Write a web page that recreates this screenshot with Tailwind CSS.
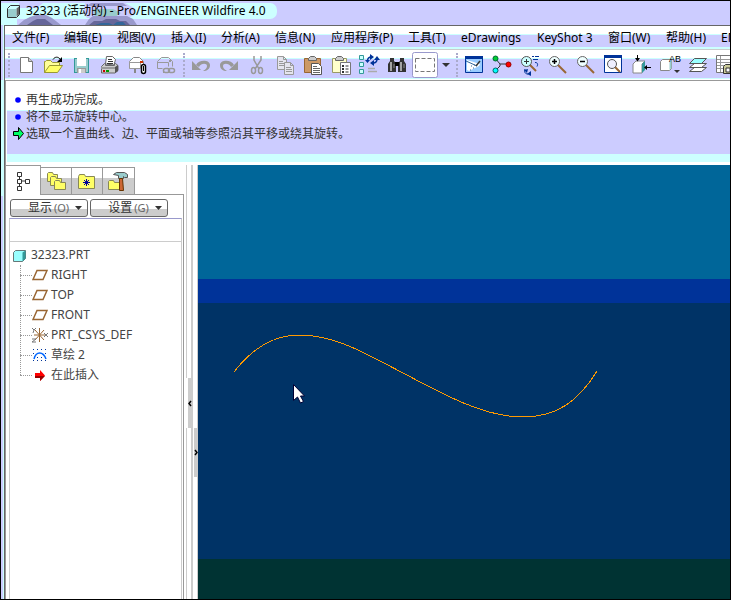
<!DOCTYPE html>
<html lang="zh-CN">
<head>
  <meta charset="UTF-8">
  <meta name="viewport" content="width=device-width, initial-scale=1.0">
  <title>32323 (活动的) - Pro/ENGINEER Wildfire 4.0</title>
  <script src="https://cdn.jsdelivr.net/npm/@tailwindcss/browser@4"></script>
  <style>
    body { font-family: 'Noto Sans', 'Noto Sans CJK SC', sans-serif; }
  </style>
</head>
<body class="h-screen overflow-hidden border border-black bg-[#ccccff] text-[12px] text-black flex flex-col">

<!-- title bar -->
<header class="relative h-6 shrink-0 overflow-hidden">
  <svg class="absolute left-0 top-0" width="290" height="24" viewBox="0 0 290 24">
    <path d="M0 2h16v22H0z" fill="#ccffff"/>
    <rect x="10" y="2" width="266" height="16" rx="7" fill="#ccffff"/>
    <path d="M18 2h24l-6 5H18z" fill="#ccccff"/>
    <path d="M84 2h40l9 5v7l-6 3H86l-4-6z" fill="#ccccff"/>
    <path d="M90 2h32l4 3H86z" fill="#9999cc"/>
    <path d="M92 8h20l8 4-6 4H94z" fill="#99cccc"/>
    <path d="M17 24l6-5 6-3 6-2h10l6 3 9 7z" fill="#9999cc"/>
    <path d="M26 24l6-4 4-2h8l8 6z" fill="#666699"/>
    <path d="M84 24l4-6 4-3h34l6 3 4 6z" fill="#9999cc"/>
    <path d="M88 24l5-4h8l4-2h10l4 2h6l4 4z" fill="#666699"/>
    <path d="M94 24l6-2h8l4 2zM112 24l4-3h6l3 3z" fill="#336699"/>
  </svg>
  <div class="relative flex h-5 items-center gap-[6px] pl-[6px]">
    <svg width="13" height="13" viewBox="0 0 13 13">
      <path d="M.5 3.500l3-3h9v9l-3 3h-9z" fill="#ccffff" stroke="#333"/>
      <path d="M1 4h8v8H1z" fill="#99cccc"/><path d="M9.500 3.500l2.500-2v8l-2.500 2z" fill="#666"/>
    </svg>
    <h1>32323 (活动的) - Pro/ENGINEER Wildfire 4.0</h1>
  </div>
</header>

<div class="flex min-h-0 flex-1">
  <div class="w-[2px] shrink-0 bg-[linear-gradient(#ccccff_55px,#ccffff_55px,#ccffff_171px,#ccccff_171px)]"></div>
  <div class="w-px shrink-0 bg-[#ccffff]"></div>

  <div class="flex min-w-0 flex-1 flex-col border-l border-t border-[#666] bg-white">

    <!-- menu -->
    <nav class="grid h-6 shrink-0 grid-cols-[52px_53px_54px_50px_54px_56px_77px_53px_76px_71px_58px_55px_60px] items-center overflow-hidden whitespace-nowrap border-b border-[#ccc] bg-[linear-gradient(#fff_8px,#cff_8px,#cff_9px,#ccf_9px,#ccf_21px,#cff_21px,#cff_23px)] pl-[7px]">
      <a href="#">文件(F)</a>
      <a href="#">编辑(E)</a>
      <a href="#">视图(V)</a>
      <a href="#">插入(I)</a>
      <a href="#">分析(A)</a>
      <a href="#">信息(N)</a>
      <a href="#">应用程序(P)</a>
      <a href="#">工具(T)</a>
      <a href="#">eDrawings</a>
      <a href="#">KeyShot 3</a>
      <a href="#">窗口(W)</a>
      <a href="#">帮助(H)</a>
      <a href="#">EMX</a>
    </nav>

    <!-- toolbar -->
    <div class="flex h-[31px] shrink-0 items-center overflow-hidden border-b border-[#999] bg-[linear-gradient(#fff_8px,#cff_8px,#cff_9px,#ccf_9px,#ccf_28px,#cff_28px,#cff_29px,#fff_29px)] [&_button]:shrink-0">
      <div class="flex w-[7px] shrink-0 justify-center"><div class="h-6 border-l-2 border-dotted border-[#aaaacc]"></div></div>
      <button class="h-6 w-7" aria-label="新建"><svg width="28" height="24"><path d="M8.500 4.500h8l4 4v11h-12z" fill="#fff" stroke="#777"/><path d="M16.500 4.500v4h4" fill="#ccc" stroke="#777"/></svg></button>
      <button class="h-6 w-7" aria-label="打开"><svg width="28" height="24"><path d="M4.500 19.500v-11h1l1-1h4l2 2h7v3" fill="#ffff99" stroke="#999933"/><path d="M4.500 19.500l5-7h13l-5 7z" fill="#ffff66" stroke="#999933"/><path d="M13 6.500c2-3 5-3 7-.5" fill="none" stroke="#000"/><path d="M22 4v5h-5z"/></svg></button>
      <button class="h-6 w-7" aria-label="保存"><svg width="28" height="24" shape-rendering="crispEdges"><path d="M6 5h15v15H6z" fill="#339999"/><path d="M7 6h13v13H7z" fill="#99cccc"/><path d="M9 5h9v8H9z" fill="#fff"/><path d="M9 15h9v5H9z" fill="#999"/><path d="M10 16h7v4h-7z" fill="#ccc"/><path d="M11 16h2v4h-2z" fill="#fff"/></svg></button>
      <button class="h-6 w-7" aria-label="打印"><svg width="28" height="24"><path d="M9.500 11l1-7.500h6l3 3L18 12z" fill="#fff" stroke="#666"/><path d="M12 6.500h4m-4 2h5m-6 2h6" stroke="#333"/><path d="M5.500 13.500l3-3h1v2h9v-2h1l2.500 2v5l-3 2.500h-13.500z" fill="#ccc" stroke="#666"/><path d="M5 14h14v2H5z" fill="#999"/><path d="M19 14l3-2v6l-3 2z" fill="#555"/><path d="M7 17h2v2H7z" fill="#c00"/><path d="M10 17h3v2h-3z" fill="#090"/></svg></button>
      <button class="h-6 w-7" aria-label="发送邮件"><svg width="28" height="24"><path d="M5.500 15.500v-7l4-4h6l4 4v7" fill="#fff" stroke="#888"/><path d="M5.500 9.500h11v6h-11z" fill="#fff" stroke="#999"/><path d="M11 16v4" stroke="#888" stroke-width="2"/><path d="M16 8h3v2h-3z" fill="#c30"/><rect x="17.500" y="11.500" width="4" height="9" rx="2" fill="#fff" stroke="#000" stroke-width="1.500"/><path d="M19.500 13v5" stroke="#000"/></svg></button>
      <button class="h-6 w-7" aria-label="发送链接"><svg width="28" height="24" fill="none" stroke="#999"><path d="M5.500 15.500v-7l4-4h7l4 4v5M5.500 9.500h11v4M5.500 15.500h5M11.500 16v4"/><path d="M17 8h2" stroke-width="2"/><rect x="11.500" y="15.500" width="6" height="4" rx="2" stroke-width="1.500"/><rect x="16.500" y="15.500" width="6" height="4" rx="2" stroke-width="1.500"/></svg></button>
      <div class="flex w-[7px] shrink-0 justify-center"><div class="h-6 border-l-2 border-dotted border-[#aaaacc]"></div></div>
      <button class="h-6 w-7" aria-label="撤消"><svg width="28" height="24"><path d="M9 12c3-6 14-5 14 0 0 4-3 6-7 6 3-2 4-3 4-5 0-3-6-3-8 1z" fill="#999"/><path d="M5 8v9h9z" fill="#999"/></svg></button>
      <button class="h-6 w-7" aria-label="重做"><svg width="28" height="24"><path d="M19 12c-3-6-14-5-14 0 0 4 3 6 7 6-3-2-4-3-4-5 0-3 6-3 8 1z" fill="#999"/><path d="M23 8v9h-9z" fill="#999"/></svg></button>
      <button class="h-6 w-7" aria-label="剪切"><svg width="28" height="24" fill="none" stroke="#999" stroke-width="1.500"><path d="M11 3v4l5 9M18 3v4l-6 9"/><ellipse cx="10.500" cy="17.500" rx="2" ry="3"/><ellipse cx="17.500" cy="17.500" rx="2" ry="3"/></svg></button>
      <button class="h-6 w-7" aria-label="复制"><svg width="28" height="24" fill="#e5e5ee" stroke="#999"><path d="M6.500 3.500h6l3 3v10h-9zM12.500 3.500v3h3M8 8.500h4m-4 2h5m-5 2h5"/><path d="M13.500 9.500h6l3 3v9h-9zM19.500 9.500v3h3M15 14.500h5m-5 2h6m-6 2h6"/></svg></button>
      <button class="h-6 w-7" aria-label="粘贴"><svg width="28" height="24"><path d="M5.500 5.500h16v14h-16z" fill="#cc9966" stroke="#996633"/><path d="M9.500 7.500v-2l2-2h4l2 2v2z" fill="#ccc" stroke="#666"/><path d="M12.500 10.500h7l3 3v8h-10z" fill="#fff" stroke="#555"/><path d="M14 13.500h4m-4 2h7m-7 2h7m-7 2h7" stroke="#666"/></svg></button>
      <button class="h-6 w-7" aria-label="选择性粘贴"><svg width="28" height="24"><path d="M5.500 5.500h14v14h-14z" fill="#ffffcc" stroke="#999966"/><path d="M8.500 7.500v-2l2-2h4l2 2v2z" fill="#ccc" stroke="#666"/><path d="M13.500 9.500h10v12h-10z" fill="#fff" stroke="#777"/><path d="M15 12h2v2h-2zM15 15h2v2h-2zM15 18h2v2h-2z" fill="#333"/><path d="M18.500 13h3m-3 3h3m-3 3h3" stroke="#333"/></svg></button>
      <button class="h-6 w-7" aria-label="再生"><svg width="28" height="24"><path d="M4.500 2.500h4v4h-4zM4.500 9.500h4v4h-4zM4.500 16.500h4v4h-4z" fill="#ccffff" stroke="#339999"/><path d="M12.500 8c0-3 2-4 4-4M22 6c0 3-2 4-4 4" fill="none" stroke="#003399" stroke-width="1.500"/><path d="M15 1l4 3-4 3zM19 7l-4 3 4 3zM10 7h5l-2.500 3zM19 7h6l-3-4z" fill="#003399"/><path d="M13 15.500h7m-7 3h9" stroke="#aaa" stroke-width="1.500"/></svg></button>
      <button class="h-6 w-7" aria-label="查找"><svg width="28" height="24"><path d="M7 5h4v3l2 2v9H5v-8l2-3zM17 5h4v3l2 3v8h-8v-9l2-2z" fill="#333"/><path d="M12 9h4v4h-4z" fill="#000"/><path d="M8 9v9M18 9v9" stroke="#ccc" stroke-width="1.500"/><path d="M11 11v4M21 11v4" stroke="#888"/></svg></button>
      <button class="h-[26px] w-7" aria-label="选取框"><svg width="28" height="26"><rect x="1.500" y=".5" width="25" height="25" rx="2" fill="#fff" stroke="#9999cc"/><rect x="4.500" y="6.500" width="19" height="13" fill="none" stroke="#777" stroke-dasharray="4 2"/></svg></button>
      <button class="h-6 w-[14px]" aria-label="选取选项"><svg width="14" height="24"><path d="M3 10h8l-4 4z" fill="#333"/></svg></button>
      <div class="flex w-[7px] shrink-0 justify-center"><div class="h-6 border-l-2 border-dotted border-[#aaaacc]"></div></div>
      <button class="h-6 w-7" aria-label="重画"><svg width="28" height="24"><path d="M5.500 3.500h17v16h-17z" fill="#99ccff" stroke="#003399"/><path d="M5 3h18v3H5z" fill="#003399"/><path d="M7 7l13 4-1 2-10 5-2-1z" fill="#fff"/><path d="M6 8l11 5" stroke="#336699"/><path d="M20 8l-4 5" stroke="#333" stroke-width="1.500"/><path d="M13 15h1m-3-2h1m-2 4h1m3-5h1" stroke="#369"/></svg></button>
      <button class="h-6 w-7" aria-label="旋转中心"><svg width="28" height="24"><path d="M7 5l5 6v2l-5 5M12 11h10" fill="none" stroke="#333"/><circle cx="7.500" cy="5.500" r="2.500" fill="#0c3" stroke="#063"/><circle cx="20.500" cy="11.500" r="2.500" fill="#f00" stroke="#900"/><circle cx="7.500" cy="17.500" r="2.500" fill="#0ff" stroke="#066"/></svg></button>
      <button class="h-6 w-7" aria-label="定向模式"><svg width="28" height="24"><path d="M14 12l6 6" stroke="#963" stroke-width="2"/><circle cx="10.500" cy="8.500" r="5" fill="#cff" stroke="#555"/><path d="M8 8.500h5M10.500 6v5" stroke="#333"/><path d="M16 3.500h2m1 0h4M17 6.500h5M19 9.500c3 0 3 2 2 4M9 16c-1 3 0 5 3 5" fill="none" stroke="#003399"/><path d="M8 17l4-1-1 4zM15 18v5l-4-2z" fill="#003399"/></svg></button>
      <button class="h-6 w-7" aria-label="放大"><svg width="28" height="24"><path d="M14 12l8 8" stroke="#963" stroke-width="2"/><circle cx="10.500" cy="8.500" r="5" fill="#efffff" stroke="#666"/><path d="M8 8.500h5M10.500 6v5" stroke="#000" stroke-width="1.500"/></svg></button>
      <button class="h-6 w-7" aria-label="缩小"><svg width="28" height="24"><path d="M14 12l8 8" stroke="#963" stroke-width="2"/><circle cx="10.500" cy="8.500" r="5" fill="#efffff" stroke="#666"/><path d="M8 8.500h5" stroke="#000" stroke-width="1.500"/></svg></button>
      <button class="h-6 w-7" aria-label="重新调整"><svg width="28" height="24"><path d="M4.500 2.500h17v17h-17z" fill="#fff" stroke="#003399"/><path d="M4 2h18v3H4z" fill="#003399"/><path d="M15 14l5 5" stroke="#963" stroke-width="2"/><circle cx="12" cy="11" r="4.500" fill="#efefff" stroke="#555"/></svg></button>
      <button class="h-6 w-7" aria-label="重定向"><svg width="28" height="24"><path d="M5 11l3-3h9l-3 3v9H5z" fill="#fff" stroke="#888"/><path d="M14 11l3-3v9l-3 3z" fill="#399"/><path d="M9.500 2v5M18 14.500h5" stroke="#000"/><path d="M7 5h5l-2.500 3.500zM19 12v5l-3-2.500z"/></svg></button>
      <button class="h-6 w-7" aria-label="已命名的视图"><svg width="28" height="24"><path d="M4.500 8.500l2-2h9v9l-2 2h-9z" fill="#fff" stroke="#888"/><path d="M13.500 9l2-2v8l-2 2z" fill="#9cc"/><text x="13" y="9" font-size="9" font-family="Liberation Sans" fill="#000">AB</text><path d="M18 17h6l-3 3z" fill="#333"/></svg></button>
      <button class="h-6 w-7" aria-label="层"><svg width="28" height="24" stroke="#555"><path d="M5.500 18.500l5-4h12l-5 4z" fill="#fff"/><path d="M5.500 14.500l5-4h12l-5 4z" fill="#fff"/><path d="M5.500 10.500l5-5h12l-5 5z" fill="#9ff"/></svg></button>
      <button class="h-6 w-7" aria-label="视图管理器"><svg width="28" height="24"><path d="M4.500 2.500h15v17h-15z" fill="#fff" stroke="#777"/><path d="M5 6.500h14M5 9.500h14M5 12.500h14M5 15.500h14M8.500 3v16" stroke="#999"/><path d="M11.500 13.500l2-2h6v9h-8z" fill="#cc9" stroke="#333"/><path d="M14 15h4v4h-4z" fill="#fff" stroke="#333"/></svg></button>
    </div>

    <!-- message area -->
    <section class="h-[84px] shrink-0 border-l border-[#999]">
      <ul class="ml-px h-[81px] bg-[linear-gradient(#fff_29px,#cff_29px,#cff_30px,#ccf_30px,#ccf_73px,#cff_73px)] pt-[10px] leading-[17px] text-[#333]">
        <li class="flex items-center gap-[5px] pl-2"><svg width="6" height="6"><circle cx="3" cy="3" r="2.800" fill="#00f"/></svg>再生成功完成。</li>
        <li class="flex items-center gap-[5px] pl-2"><svg width="6" height="6"><circle cx="3" cy="3" r="2.800" fill="#00f"/></svg>将不显示旋转中心。</li>
        <li class="flex items-center gap-[2px] pl-[6px]"><svg width="11" height="13"><path d="M.5 4.500h5v-4l5 6-5 6v-4h-5z" fill="#0f6" stroke="#000"/></svg>选取一个直曲线、边、平面或轴等参照沿其平移或绕其旋转。</li>
      </ul>
    </section>

    <div class="flex min-h-0 flex-1">
      <!-- model tree -->
      <aside class="flex w-[179px] shrink-0 flex-col border-l border-[#999]">
        <div class="flex h-[30px] shrink-0 items-end">
          <button class="flex h-[30px] w-[35px] items-center justify-center border-r border-t border-[#999]" aria-label="模型树"><svg width="15" height="20" fill="#fff" stroke="#333"><path d="M3.500 3v14M3.500 10h6"/><path d="M1.500 1.500h4v4h-4zM1.500 8.500h4v4h-4zM1.500 15.500h4v4h-4zM9.500 8.500h4v4h-4z"/></svg></button>
          <button class="flex h-7 w-[31px] items-center justify-center border-b border-r border-t border-[#999] bg-[linear-gradient(#fff_10px,#ccc_10px)]" aria-label="文件夹浏览器"><svg width="19" height="20" fill="#ff6" stroke="#885"><path d="M.5 10.500v-8l1-1h4l1 2h4v7z"/><path d="M3.500 14.500v-8l1-1h4l1 2h5v7z"/><path d="M7.500 18.500v-8l1-1h4l1 2h5v7z"/></svg></button>
          <button class="flex h-7 w-[31px] items-center justify-center border-b border-r border-t border-[#999] bg-[linear-gradient(#fff_10px,#ccc_10px)]" aria-label="收藏夹"><svg width="18" height="16"><path d="M.5 15.500v-12l1-2h5l1 2h9v12z" fill="#ff6" stroke="#885"/><path d="M8.500 6v7M5 9.500h7M6 7l5 5M11 7l-5 5" stroke="#009"/></svg></button>
          <button class="flex h-7 w-8 items-center justify-center border-b border-r border-t border-[#999] bg-[linear-gradient(#fff_10px,#ccc_10px)]" aria-label="连接"><svg width="22" height="20"><path d="M.5 18.500v-8l1-1h4l1 2h7v7z" fill="#ff6" stroke="#885"/><path d="M5.500 3.500l3-2h8l3 2v3h-3l-1-1v2h-5v-3z" fill="#9cc" stroke="#555"/><path d="M11.500 7.500h3l1 12h-4z" fill="#c63" stroke="#630"/></svg></button>
          <div class="flex-1 self-stretch border-b border-[#999]"></div>
        </div>

        <div class="flex min-h-0 flex-1 flex-col border-r border-[#999] pl-[3px] pr-px pt-1">
          <div class="flex gap-[2px] pl-px text-[#333]">
            <button class="flex h-[18px] w-[78px] items-center justify-center gap-[6px] rounded-[3px] border border-[#666] bg-[linear-gradient(#fff_9px,#ccc_9px)] pl-3">显示<span class="-ml-1 text-[11px] text-[#666]">(O)</span><svg width="7" height="4"><path d="M0 0h7L3.500 4z" fill="#333"/></svg></button>
            <button class="flex h-[18px] w-[78px] items-center justify-center gap-[6px] rounded-[3px] border border-[#666] bg-[linear-gradient(#fff_9px,#ccc_9px)] pl-3">设置<span class="-ml-1 text-[11px] text-[#666]">(G)</span><svg width="7" height="4"><path d="M0 0h7L3.500 4z" fill="#333"/></svg></button>
          </div>
          <input type="text" aria-label="过滤" class="mt-px block h-6 w-full shrink-0 border border-[#ccc] border-t-[#9999cc] bg-white px-1 outline-none">
          <div class="flex-1 border-x border-[#ccc] pl-[3px] pt-[3px] text-[#444]">
            <div class="flex h-5 items-center gap-[5px]"><svg width="13" height="13"><path d="M.5 3.500l2-2h10v8l-3 3h-9z" fill="#9ff" stroke="#677"/><path d="M9.500 3.500l3-2v8l-3 3z" fill="#399"/></svg>32323.PRT</div>
            <ul class="relative pl-[7px]">
              <li class="absolute bottom-[10px] left-[7px] top-0 border-l border-dotted border-[#999]" aria-hidden="true"></li>
              <li class="flex h-5 items-center"><span class="w-3 border-t border-dotted border-[#999]"></span><svg class="mr-[3px]" width="16" height="13"><path d="M5 1.500h10l-4 9H1z" fill="none" stroke="#963" stroke-width="1.500"/></svg>RIGHT</li>
              <li class="flex h-5 items-center"><span class="w-3 border-t border-dotted border-[#999]"></span><svg class="mr-[3px]" width="16" height="13"><path d="M5 1.500h10l-4 9H1z" fill="none" stroke="#963" stroke-width="1.500"/></svg>TOP</li>
              <li class="flex h-5 items-center"><span class="w-3 border-t border-dotted border-[#999]"></span><svg class="mr-[3px]" width="16" height="13"><path d="M5 1.500h10l-4 9H1z" fill="none" stroke="#963" stroke-width="1.500"/></svg>FRONT</li>
              <li class="flex h-5 items-center"><span class="w-3 border-t border-dotted border-[#999]"></span><svg class="mr-[3px]" width="16" height="16"><path d="M7.500 1v14M2 8h11M3 3l9 10M12 3L3 13" stroke="#963"/><path d="M0 1l2 2 2-2M2 3l-1 3M0 12h4l-4 3h4M12 6l4 4M16 6l-4 4" fill="none" stroke="#777"/></svg>PRT_CSYS_DEF</li>
              <li class="flex h-5 items-center"><span class="w-3 border-t border-dotted border-[#999]"></span><svg class="mr-[3px]" width="16" height="14"><path d="M1 1.500h14M1 12.500h14M1 5.500h1M13 5.500h1M5 9.500h1M9 9.500h1" stroke="#039" stroke-dasharray="1 3"/><path d="M2 11c2-8 9-8 12 0" fill="none" stroke="#06f" stroke-width="1.500"/></svg>草绘 2</li>
              <li class="flex h-5 items-center"><span class="w-3 border-t border-dotted border-[#999]"></span><svg class="mr-[3px]" width="16" height="13"><path d="M3 4h5V1l5 5.500L8 12V9H3z" fill="#f00"/><path d="M3 7h10L8 12V9H3z" fill="#900"/></svg>在此插入</li>
            </ul>
          </div>
        </div>
      </aside>

      <!-- splitter -->
      <div class="relative flex w-[14px] shrink-0 border-r border-[#ccc] pl-[2px]">
        <div class="w-[7px] border-l border-r-2 border-[#ccc]"></div>
        <button class="absolute left-[2px] top-[213px] flex h-[50px] w-[7px] items-center bg-white" aria-label="折叠"><span class="ml-[2px] flex h-full w-[5px] items-center bg-[#ccc]"><svg width="4" height="7"><path d="M3 1L1 3.500 3 6" fill="none" stroke="#000" stroke-width="1.500"/></svg></span></button>
        <button class="absolute left-[10px] top-[263px] flex h-[49px] w-1 items-center bg-[#ccc]" aria-label="展开"><svg width="4" height="7"><path d="M1 1l2 2.500L1 6" fill="none" stroke="#000" stroke-width="1.500"/></svg></button>
      </div>

      <!-- graphics window -->
      <main class="relative flex min-w-0 flex-1 flex-col overflow-hidden">
        <div class="h-[114px] shrink-0 bg-[#006699]"></div>
        <div class="h-6 shrink-0 bg-[#003399]"></div>
        <div class="flex-1 bg-[#003366]"></div>
        <div class="h-10 shrink-0 bg-[#003333]"></div>
        <svg class="absolute left-0 top-0" width="420" height="300" viewBox="0 0 420 300">
          <path d="M36 207C56 181 77 170 102 170C138 170 170 190 207 209C250 232 288 252 325 252C358 252 380 237 399 206" fill="none" stroke="#ff9900" shape-rendering="crispEdges"/>
          <path d="M95.500 219.500v16l4-3.500 3 6 3-1.500-3-5.500h4z" fill="#fff" stroke="#003"/>
        </svg>
      </main>
    </div>
  </div>
</div>

</body>
</html>
